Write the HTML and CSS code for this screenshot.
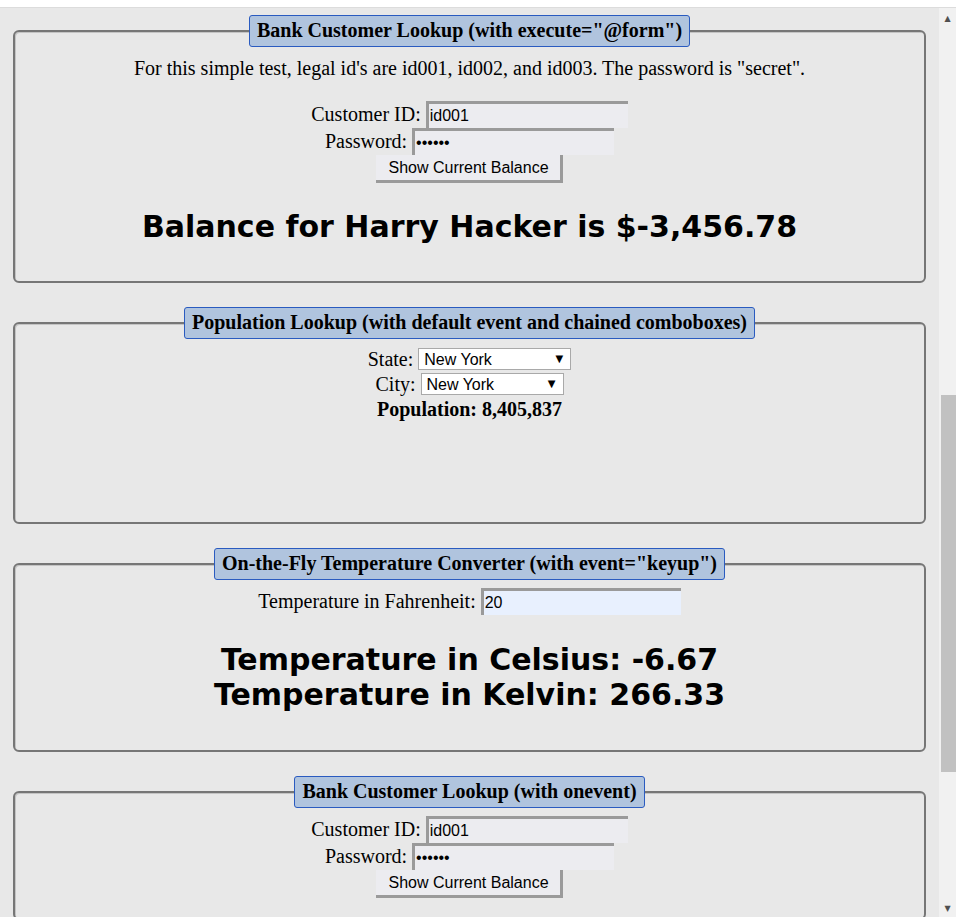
FILE: index.html
```html
<!DOCTYPE html>
<html>
<head>
<meta charset="utf-8">
<title>Ajax Examples</title>
<link rel="stylesheet" href="styles.css">
</head>
<body>
<div class="topbar"></div>
<div class="page">
  <fieldset class="box box-bank1">
    <legend>Bank Customer Lookup (with execute="@form")</legend>
    <p class="intro">For this simple test, legal id's are id001, id002, and id003. The password is "secret".</p>
    <form class="lookup">
      <div class="row">Customer ID: <input class="txt txt-id" type="text" value="id001"></div>
      <div class="row">Password: <input class="txt txt-pw" type="password" value="secret"></div>
      <div class="row"><button type="button" class="btn">Show Current Balance</button></div>
    </form>
    <h2 class="result result-bank">Balance for Harry Hacker is $-3,456.78</h2>
  </fieldset>

  <fieldset class="box box-pop">
    <legend>Population Lookup (with default event and chained comboboxes)</legend>
    <div class="srow">State: <span class="sel sel-state"><select><option>New York</option></select></span></div>
    <div class="srow">City: <span class="sel sel-city"><select><option>New York</option></select></span></div>
    <div class="srow pop">Population: 8,405,837</div>
  </fieldset>

  <fieldset class="box box-temp">
    <legend>On-the-Fly Temperature Converter (with event="keyup")</legend>
    <div class="row">Temperature in Fahrenheit: <input class="txt txt-temp" type="text" value="20"></div>
    <h2 class="result result-temp">Temperature in Celsius: -6.67<br>Temperature in Kelvin: 266.33</h2>
  </fieldset>

  <fieldset class="box box-bank2">
    <legend>Bank Customer Lookup (with onevent)</legend>
    <form class="lookup">
      <div class="row">Customer ID: <input class="txt txt-id" type="text" value="id001"></div>
      <div class="row">Password: <input class="txt txt-pw" type="password" value="secret"></div>
      <div class="row"><button type="button" class="btn">Show Current Balance</button></div>
    </form>
  </fieldset>
</div>
<div class="scrollbar">
  <span class="sb-arrow sb-up">&#9650;</span>
  <span class="sb-thumb"></span>
  <span class="sb-arrow sb-down">&#9660;</span>
</div>
</body>
</html>
```

FILE: styles.css
```css
html, body {
  margin: 0;
  padding: 0;
}
body {
  background: #e8e8e8;
  font-family: "Liberation Serif", "Times New Roman", serif;
  font-size: 20px;
  color: #000;
  overflow: hidden;
  height: 917px;
}
.topbar {
  height: 7px;
  background: #fff;
  border-bottom: 1px solid #dcdcdc;
}
.page {
  width: 939px;
  box-sizing: border-box;
  padding: 7px 13px 0 13px;
}
.box {
  margin: 0 0 24px 0;
  padding: 8px 10px 0;
  border: 2px solid #767676;
  border-radius: 6px;
  box-shadow: inset 1px 1px 0 #c4c4c4;
  text-align: center;
  min-width: 0;
}
.box legend {
  margin: 0 auto;
  padding: 3px 7px 4px;
  background: #b0c4de;
  border: 1px solid #2a5bc0;
  border-radius: 3px;
  font-weight: bold;
  font-size: 20px;
  line-height: 23px;
}
.box-bank1 { padding-bottom: 36px; }
.box-pop { padding-bottom: 101px; }
.box-temp { padding-bottom: 38px; }
.box-bank2 { padding-bottom: 20px; }

.intro {
  margin: 1px 0 21px;
  line-height: 24px;
}
.row {
  line-height: 27px;
}
.srow {
  line-height: 24px;
}
.txt {
  font-family: "Liberation Sans", Arial, sans-serif;
  font-size: 16px;
  height: 27px;
  box-sizing: border-box;
  padding: 0 1px;
  margin: 0;
  border-style: solid;
  border-width: 3px 0 0 3px;
  border-color: #9a9a9a;
  background: #ececf0;
  vertical-align: top;
  outline: none;
}
.txt-id, .txt-pw { width: 202px; }
.txt-temp { width: 200px; background: #e8f0fe; }
.btn {
  font-family: "Liberation Sans", Arial, sans-serif;
  font-size: 16px;
  height: 28px;
  margin: 0;
  padding: 0 11px 0 12px;
  background: #ececf0;
  border-style: solid;
  border-width: 0 3px 3px 0;
  border-color: #9a9a9a;
  vertical-align: top;
}
.result {
  font-family: "DejaVu Sans", Verdana, sans-serif;
  font-weight: bold;
  font-size: 30px;
  margin: 0;
}
.result-bank {
  margin-top: 26px;
  line-height: 36px;
}
.result-temp {
  margin-top: 27px;
  line-height: 35px;
}
.sel {
  position: relative;
  display: inline-block;
  vertical-align: top;
  margin-top: 1px;
}
.sel select {
  -webkit-appearance: none;
  appearance: none;
  font-family: "Liberation Sans", Arial, sans-serif;
  font-size: 16px;
  height: 22px;
  padding: 0 0 0 5px;
  background: #fff;
  border: 1px solid #a9a9a9;
  color: #000;
  vertical-align: top;
  margin: 0;
}
.sel::after {
  content: "\25BC";
  position: absolute;
  right: 8px;
  top: 4px;
  font-size: 10px;
  font-family: "DejaVu Sans", sans-serif;
  line-height: 14px;
  pointer-events: none;
}
.sel-state select { width: 153px; }
.sel-city select { width: 143px; }
.pop {
  font-weight: bold;
}

.scrollbar {
  position: fixed;
  top: 8px;
  right: 0;
  bottom: 0;
  width: 17px;
  background: #f1f1f1;
}
.sb-arrow {
  position: absolute;
  left: 0;
  width: 17px;
  text-align: center;
  font-size: 8px;
  color: #505050;
  font-family: "DejaVu Sans", sans-serif;
  line-height: 17px;
}
.sb-up { top: 2px; }
.sb-down { bottom: 0; }
.sb-thumb {
  position: absolute;
  left: 2px;
  width: 15px;
  top: 387px;
  height: 377px;
  background: #c1c1c1;
}
```
